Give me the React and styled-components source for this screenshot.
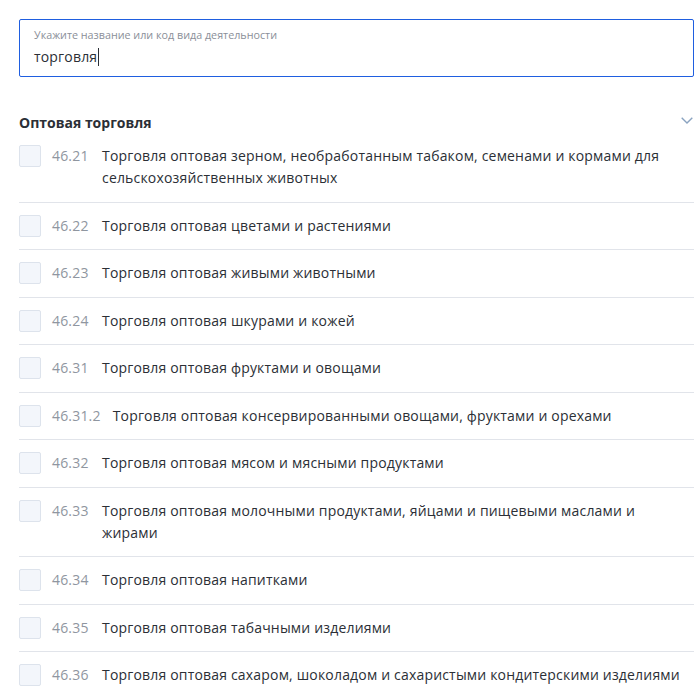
import React from 'react';
import styled, { createGlobalStyle } from 'styled-components';

const GlobalStyle = createGlobalStyle`
  body {
    margin: 0;
    background: #fff;
    font-family: "Open Sans", "Noto Sans", sans-serif;
    color: #2b2f36;
  }
`;

const activities = [
  { code: '46.21', title: 'Торговля оптовая зерном, необработанным табаком, семенами и кормами для сельскохозяйственных животных' },
  { code: '46.22', title: 'Торговля оптовая цветами и растениями' },
  { code: '46.23', title: 'Торговля оптовая живыми животными' },
  { code: '46.24', title: 'Торговля оптовая шкурами и кожей' },
  { code: '46.31', title: 'Торговля оптовая фруктами и овощами' },
  { code: '46.31.2', title: 'Торговля оптовая консервированными овощами, фруктами и орехами' },
  { code: '46.32', title: 'Торговля оптовая мясом и мясными продуктами' },
  { code: '46.33', title: 'Торговля оптовая молочными продуктами, яйцами и пищевыми маслами и жирами' },
  { code: '46.34', title: 'Торговля оптовая напитками' },
  { code: '46.35', title: 'Торговля оптовая табачными изделиями' },
  { code: '46.36', title: 'Торговля оптовая сахаром, шоколадом и сахаристыми кондитерскими изделиями' },
];

export default function App() {
  return (
    <Page>
      <GlobalStyle />
      <SearchField>
        <FieldLabel>Укажите название или код вида деятельности</FieldLabel>
        <FieldValue>
          торговля<Caret />
        </FieldValue>
      </SearchField>

      <Group>
        <GroupHeader>
          <GroupTitle>Оптовая торговля</GroupTitle>
          <Chevron width="12" height="7" viewBox="0 0 12 7">
            <path d="M0.7 0.7 L6 6 L11.3 0.7" fill="none" stroke="#8aa3c0" strokeWidth="1.4" />
          </Chevron>
        </GroupHeader>

        <List>
          {activities.map(a => (
            <Row key={a.code}>
              <Checkbox />
              <Code>{a.code}</Code>
              <Title>{a.title}</Title>
            </Row>
          ))}
        </List>
      </Group>
    </Page>
  );
}

const Page = styled.div`
  padding: 19px 3px 0 19px;
`;

const SearchField = styled.div`
  height: 58px;
  box-sizing: border-box;
  border: 1px solid #1f5ee0;
  border-radius: 2px;
  padding: 8px 14px 0;
`;

const FieldLabel = styled.div`
  font-size: 10.75px;
  line-height: 15px;
  color: #8a8f99;
`;

const FieldValue = styled.div`
  display: flex;
  align-items: center;
  margin-top: 4px;
  font-size: 14px;
  letter-spacing: 0.18px;
  line-height: 20px;
  color: #2b2f36;
`;

const Caret = styled.span`
  display: inline-block;
  width: 1px;
  height: 18px;
  background: #2b2f36;
  margin-left: 1px;
`;

const Group = styled.div`
  margin-top: 35px;
`;

const GroupHeader = styled.div`
  display: flex;
  align-items: center;
  justify-content: space-between;
  height: 20px;
`;

const GroupTitle = styled.div`
  font-size: 14px;
  font-weight: 700;
  color: #2b2f36;
`;

const Chevron = styled.svg`
  margin-right: 1px;
  margin-top: -3px;
`;

const List = styled.div`
  margin-top: 1px;
`;

const Row = styled.div`
  display: flex;
  align-items: flex-start;
  padding: 12px 0 12.5px;
  border-bottom: 1px solid #e1e4ea;
  font-size: 14px;
  letter-spacing: 0.18px;
  line-height: 22px;
`;

const Checkbox = styled.span`
  flex: none;
  width: 22px;
  height: 22px;
  box-sizing: border-box;
  border: 1px solid #dde3ec;
  border-radius: 2px;
  background: #f3f6fb;
`;

const Code = styled.span`
  flex: none;
  min-width: 38px;
  margin: 0 12px 0 11px;
  color: #8f96a0;
`;

const Title = styled.span`
  color: #2b2f36;
`;
